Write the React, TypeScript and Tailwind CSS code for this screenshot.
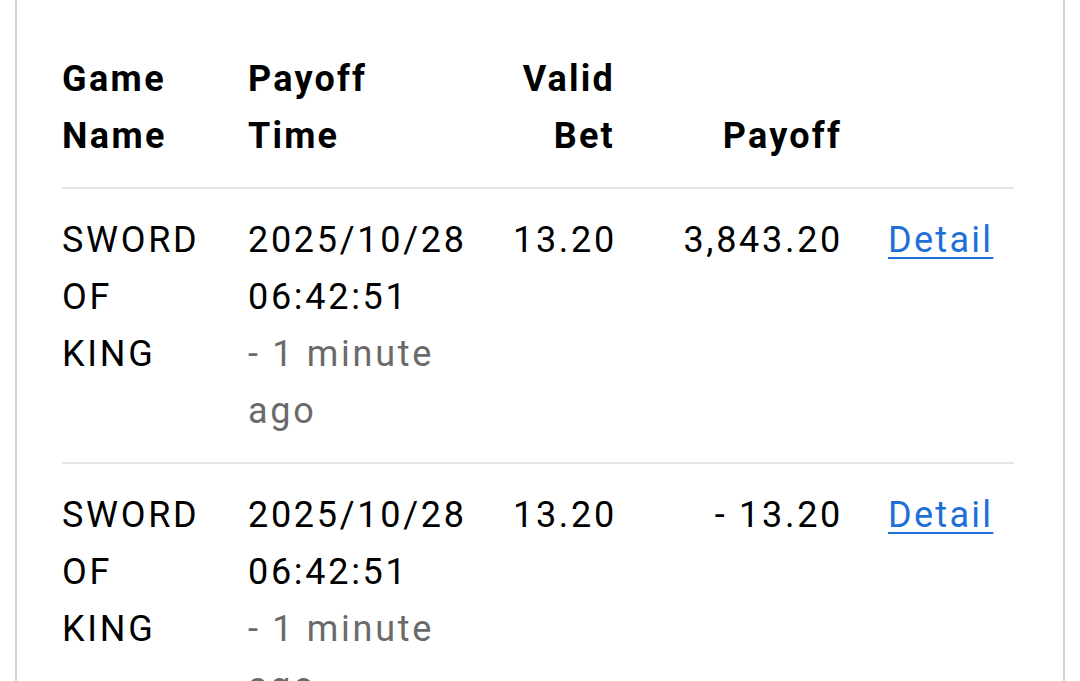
import React from 'react';

interface BetRow {
  game: string;
  date: string;
  time: string;
  ago: string;
  validBet: string;
  payoff: string;
}

const rows: BetRow[] = [
  {
    game: 'SWORD OF KING',
    date: '2025/10/28',
    time: '06:42:51',
    ago: '- 1 minute ago',
    validBet: '13.20',
    payoff: '3,843.20',
  },
  {
    game: 'SWORD OF KING',
    date: '2025/10/28',
    time: '06:42:51',
    ago: '- 1 minute ago',
    validBet: '13.20',
    payoff: '- 13.20',
  },
];

export default function App() {
  return (
    <div
      className="h-[681px] overflow-hidden bg-white"
      style={{ fontFamily: 'Roboto, "Noto Sans", sans-serif' }}
    >
      <div className="mx-[15px] h-full border-x-2 border-[#d6d6d6] pl-[45px] pt-[51px]">
        <table className="w-[952px] table-fixed border-collapse text-[36px] leading-[57px] tracking-[2.7px] text-black">
          <colgroup>
            <col className="w-[162px]" />
            <col className="w-[265px]" />
            <col className="w-[148px]" />
            <col className="w-[227px]" />
            <col className="w-[150px]" />
          </colgroup>
          <thead>
            <tr className="border-b-2 border-[#e4e4e4]">
              <th className="pr-6 pb-[22px] text-left align-bottom font-bold tracking-[2.4px]">Game Name</th>
              <th className="px-6 pb-[22px] text-left align-bottom font-bold tracking-[2.2px]">Payoff Time</th>
              <th className="pl-6 pr-[22px] pb-[22px] text-right align-bottom font-bold tracking-[2.2px]">Valid Bet</th>
              <th className="pl-6 pr-[22px] pb-[22px] text-right align-bottom font-bold tracking-[2.2px]">Payoff</th>
              <th className="px-6 pb-[22px]"></th>
            </tr>
          </thead>
          <tbody>
            {rows.map((r, i) => (
              <tr key={i} className="border-b-2 border-[#e4e4e4]">
                <td className="pr-6 pt-[23px] pb-[22px] align-top">{r.game}</td>
                <td className="px-6 pt-[23px] pb-[22px] align-top">
                  <div>{r.date}</div>
                  <div>{r.time}</div>
                  <div className="text-[#6a6a6a]">{r.ago}</div>
                </td>
                <td className="px-6 pt-[23px] pb-[22px] text-left align-top">{r.validBet}</td>
                <td className="pl-6 pr-[21px] pt-[23px] pb-[22px] text-right align-top">{r.payoff}</td>
                <td className="px-6 pt-[23px] pb-[22px] align-top">
                  <a
                    href="#"
                    className="tracking-[2.3px] text-[#1f6fd8] underline decoration-2 underline-offset-[5px]"
                  >
                    Detail
                  </a>
                </td>
              </tr>
            ))}
          </tbody>
        </table>
      </div>
    </div>
  );
}
